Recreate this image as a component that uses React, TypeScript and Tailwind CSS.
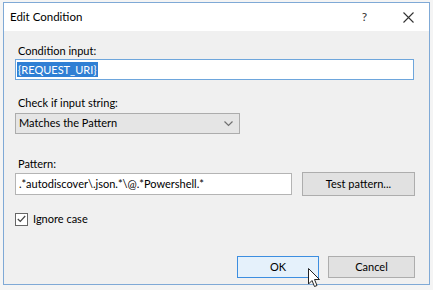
export default function App() {
  const font = { fontFamily: 'Lato, "Noto Sans", "Liberation Sans", sans-serif' }

  return (
    <div className="relative w-[433px] h-[290px] bg-[#f4f4f4] pl-[3px] pt-[2px] overflow-hidden" style={font}>
      {/* Dialog */}
      <div className="w-[427px] h-[283px] border border-[#7fa9d6] bg-[#f0f0f0] flex flex-col text-[11px] text-black">
        {/* Title bar */}
        <div className="h-[28px] bg-white flex items-center pl-[6px] shrink-0">
          <span className="text-[11.5px]">Edit Condition</span>
          <span className="ml-auto mr-[36px] text-[12px] text-[#333]">?</span>
          <svg width="11" height="11" viewBox="0 0 11 11" className="mr-[15px]">
            <path d="M0.5 0.5 L10.5 10.5 M10.5 0.5 L0.5 10.5" stroke="#333" strokeWidth="1.1" />
          </svg>
        </div>

        {/* Body */}
        <div className="flex flex-col pl-[11px] pr-[13px] pt-[12px]">
          <label className="h-[16px] leading-[16px] pl-[3px]">Condition input:</label>
          <div className="h-[21px] w-[399px] bg-white border border-[#6ea6dc] flex items-center px-[1px]">
            <span className="bg-[#2f7fd4] text-white leading-[15px] px-[1px]">{'{REQUEST_URI}'}</span>
          </div>

          <label className="h-[16px] leading-[16px] pl-[3px] mt-[15px]">Check if input string:</label>
          <div className="mt-[2px] h-[21px] w-[225px] bg-[#e5e5e5] border border-[#acacac] flex items-center pl-[3px] pr-[6px]">
            <span>Matches the Pattern</span>
            <svg width="9" height="6" viewBox="0 0 9 6" className="ml-auto">
              <path d="M0.5 0.5 L4.5 4.5 L8.5 0.5" fill="none" stroke="#707070" strokeWidth="1.2" />
            </svg>
          </div>

          <label className="h-[16px] leading-[16px] pl-[3px] mt-[22px]">Pattern:</label>
          <div className="flex items-center gap-[10px]">
            <div className="h-[22px] w-[277px] bg-white border border-[#b4b4b4] flex items-center pl-[3px]">
              .*autodiscover\.json.*\@.*Powershell.*
            </div>
            <button className="h-[24px] w-[113px] bg-[#e1e1e1] border border-[#adadad] flex items-center justify-center">
              Test pattern...
            </button>
          </div>

          <div className="flex items-center mt-[15px] h-[16px]">
            <div className="w-[13px] h-[13px] border border-[#666] bg-white flex items-center justify-center">
              <svg width="9" height="8" viewBox="0 0 9 8">
                <path d="M0.8 4 L3.3 6.5 L8.2 1" fill="none" stroke="#444" strokeWidth="1.2" />
              </svg>
            </div>
            <span className="ml-[5px]">Ignore case</span>
          </div>

          <div className="flex justify-end gap-[9px] mt-[29px] pr-[1px]">
            <button className="h-[22px] w-[82px] bg-[#e5f1fb] border border-[#3d8ee0] flex items-center justify-center">
              OK
            </button>
            <button className="h-[22px] w-[87px] bg-[#e1e1e1] border border-[#adadad] flex items-center justify-center">
              Cancel
            </button>
          </div>
        </div>
      </div>

      {/* Mouse cursor */}
      <svg className="absolute left-[308px] top-[268px]" width="13" height="20" viewBox="0 0 13 20">
        <path
          d="M0.5 0.5 L0.5 16 L4 12.5 L6.5 18.5 L9 17.5 L6.5 11.5 L11.5 11.5 Z"
          fill="white"
          stroke="#222"
          strokeWidth="1"
          strokeLinejoin="round"
        />
      </svg>
    </div>
  )
}
